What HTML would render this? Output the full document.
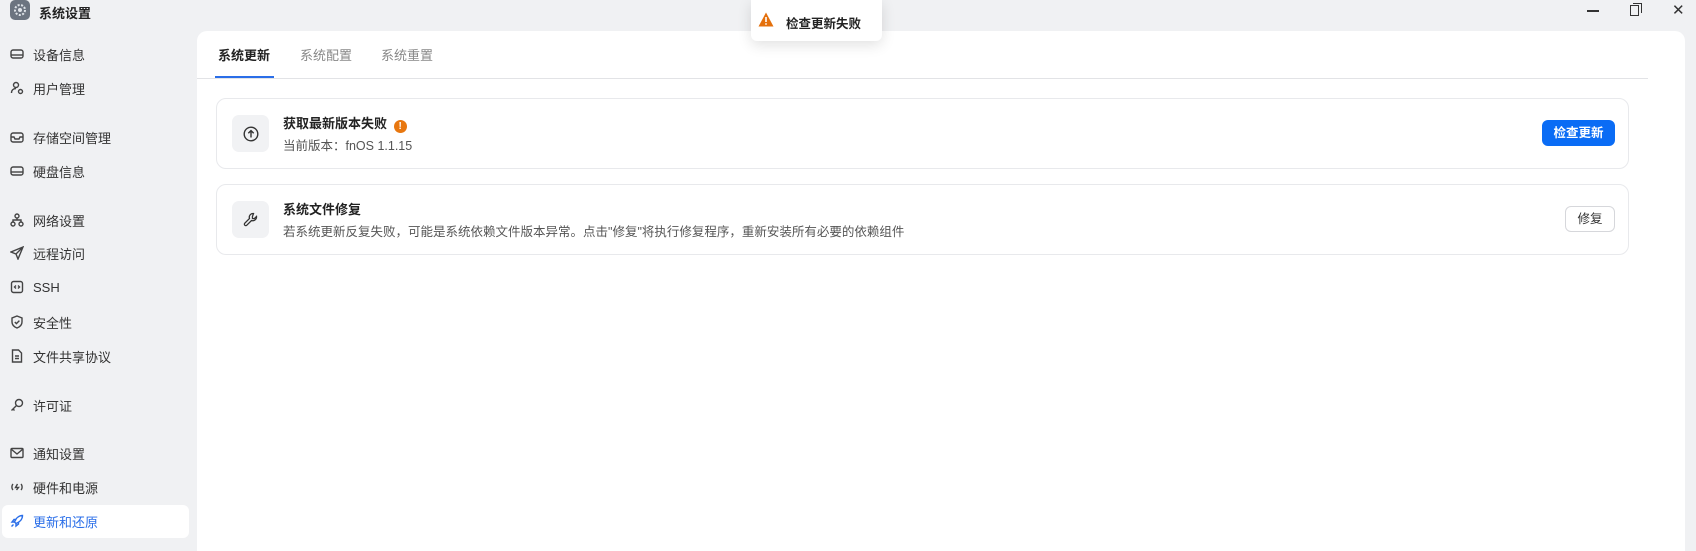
<!DOCTYPE html>
<html><head><meta charset="utf-8"><style>
*{margin:0;padding:0;box-sizing:border-box}
body{width:1696px;height:541px;background:#f0f1f3;font-family:"Liberation Sans","Noto Sans CJK SC",sans-serif;position:relative;overflow:hidden;color:#222}
.abs{position:absolute}
.nav{position:absolute;left:10px;font-size:13px;color:#333;display:flex;align-items:center;height:20px}
.nav svg{width:14px;height:14px;margin-right:9px;stroke:#444;fill:none;stroke-width:1.4}
.panel{position:absolute;left:197px;top:31px;width:1488px;height:520px;background:#fff;border-radius:10px 10px 0 0}
.card{position:absolute;left:19px;width:1413px;height:71px;border:1px solid #e8e9ec;border-radius:10px}
.ib{position:absolute;left:15px;top:16px;width:37px;height:37px;background:#f1f2f4;border-radius:7px;display:flex;align-items:center;justify-content:center}
.t{position:absolute;left:66px;top:14px;font-size:13px;font-weight:bold;color:#222}
.s{position:absolute;left:66px;top:36px;font-size:12.5px;color:#555}
</style></head><body>
<div class="abs" style="left:10px;top:0;width:20px;height:20px;background:#6c7480;border-radius:5px"><svg width="20" height="20" viewBox="0 0 20 20"><circle cx="10" cy="10" r="5" fill="none" stroke="#dfe3e8" stroke-width="2" stroke-dasharray="2 1.5"/><circle cx="10" cy="10" r="2" fill="#dfe3e8"/></svg></div>
<div class="abs" style="left:39px;top:3px;font-size:13px;font-weight:bold">系统设置</div>
<div class="abs" style="left:1587px;top:10px;width:12px;height:1.5px;background:#333"></div>
<div class="abs" style="left:1630px;top:5px;width:9px;height:11px;border:1.3px solid #333"></div>
<div class="abs" style="left:1633px;top:3px;width:9px;height:10px;border-top:1.3px solid #333;border-right:1.3px solid #333"></div>
<div class="abs" style="left:1672px;top:1px;font-size:15px;color:#333">✕</div>

<div class="nav" style="top:44px"><svg viewBox="0 0 14 14"><rect x="1" y="3" width="12" height="8" rx="2"/><path d="M1 8h12"/></svg>设备信息</div>
<div class="nav" style="top:78px"><svg viewBox="0 0 14 14"><circle cx="6" cy="4" r="2.5"/><path d="M1.5 12c0-3 2-4.5 4.5-4.5"/><circle cx="10.5" cy="10.5" r="2"/></svg>用户管理</div>
<div class="nav" style="top:127px"><svg viewBox="0 0 14 14"><rect x="1" y="3" width="12" height="9" rx="2"/><path d="M1 7h3l1 2h4l1-2h3"/></svg>存储空间管理</div>
<div class="nav" style="top:161px"><svg viewBox="0 0 14 14"><rect x="1" y="3" width="12" height="8" rx="2"/><path d="M1 8h12"/></svg>硬盘信息</div>
<div class="nav" style="top:210px"><svg viewBox="0 0 14 14"><circle cx="7" cy="3" r="2"/><circle cx="3" cy="11" r="2"/><circle cx="11" cy="11" r="2"/><path d="M7 5v2M3 9V7h8v2"/></svg>网络设置</div>
<div class="nav" style="top:243px"><svg viewBox="0 0 14 14"><path d="M13 1L1 6l5 2 2 5z M6 8l7-7"/></svg>远程访问</div>
<div class="nav" style="top:277px"><svg viewBox="0 0 14 14"><rect x="1.5" y="1.5" width="11" height="11" rx="2"/><path d="M6 5.5L4.5 7 6 8.5M8 5.5L9.5 7 8 8.5"/></svg>SSH</div>
<div class="nav" style="top:312px"><svg viewBox="0 0 14 14"><path d="M7 1l5 2v4c0 3-2.5 5-5 6-2.5-1-5-3-5-6V3z"/><path d="M4.8 7l1.6 1.6L9.4 5.6"/></svg>安全性</div>
<div class="nav" style="top:346px"><svg viewBox="0 0 14 14"><path d="M2.5 1h6l3 3v9h-9z"/><path d="M5 7h4M5 9.5h4"/></svg>文件共享协议</div>
<div class="nav" style="top:395px"><svg viewBox="0 0 14 14"><circle cx="9" cy="5" r="3.5"/><path d="M6.5 7.5L1.5 12.5M3 11l1.5 1.5"/></svg>许可证</div>
<div class="nav" style="top:443px"><svg viewBox="0 0 14 14"><rect x="1" y="2.5" width="12" height="9" rx="1"/><path d="M1 3l6 5 6-5"/></svg>通知设置</div>
<div class="nav" style="top:477px"><svg viewBox="0 0 14 14"><path d="M3 4C1.5 5.5 1.5 8.5 3 10M11 4c1.5 1.5 1.5 4.5 0 6M7.5 4L5.5 7.5h3L6.5 10"/></svg>硬件和电源</div>
<div class="abs" style="left:2px;top:505px;width:187px;height:33px;background:#fff;border-radius:6px"></div>
<div class="nav" style="top:511px;color:#2a6ee8"><svg viewBox="0 0 14 14" style="stroke:#2a6ee8"><path d="M12.5 1.5C9 1.5 6 4 4.5 8l1.5 1.5C10 8 12.5 5 12.5 1.5z M4.5 8H2l2-2.5h2.5 M6 9.5V12l2.5-2V7.5 M3.5 10.5L1.5 12.5"/></svg>更新和还原</div>

<div class="panel">
 <div class="abs" style="left:21px;top:14px;font-size:13px;font-weight:bold">系统更新</div>
 <div class="abs" style="left:103px;top:14px;font-size:13px;color:#888">系统配置</div>
 <div class="abs" style="left:184px;top:14px;font-size:13px;color:#888">系统重置</div>
 <div class="abs" style="left:0;top:47px;width:1451px;height:1px;background:#e2e3e6"></div>
 <div class="abs" style="left:18px;top:45px;width:59px;height:2px;background:#2a6ee8"></div>
 <div class="card" style="top:67px">
  <div class="ib"><svg width="16" height="16" viewBox="0 0 16 16" fill="none" stroke="#333" stroke-width="1.4"><circle cx="8" cy="8" r="6.8"/><path d="M8 11.5V4.8M5.3 7.3L8 4.6l2.7 2.7"/></svg></div>
  <div class="t">获取最新版本失败 <span style="display:inline-block;width:13px;height:13px;border-radius:50%;background:#e8770f;color:#fff;font-size:10px;text-align:center;line-height:13px;vertical-align:-1px;margin-left:3px">!</span></div>
  <div class="s">当前版本：fnOS 1.1.15</div>
  <div class="abs" style="left:1325px;top:21px;width:73px;height:26px;background:#0a6cf5;border-radius:6px;color:#fff;font-size:12.5px;font-weight:bold;text-align:center;line-height:26px">检查更新</div>
 </div>
 <div class="card" style="top:153px">
  <div class="ib"><svg width="16" height="16" viewBox="0 0 16 16" fill="none" stroke="#333" stroke-width="1.3"><path d="M10.5 1.5a3.8 3.8 0 0 0-4 5L1.8 11.2a1.4 1.4 0 0 0 2 2l4.7-4.7a3.8 3.8 0 0 0 5-4L11.3 6.6 9.5 6.5 9.4 4.7z"/></svg></div>
  <div class="t">系统文件修复</div>
  <div class="s">若系统更新反复失败，可能是系统依赖文件版本异常。点击"修复"将执行修复程序，重新安装所有必要的依赖组件</div>
  <div class="abs" style="left:1348px;top:21px;width:50px;height:26px;border:1px solid #d6d7db;border-radius:6px;font-size:12.5px;text-align:center;line-height:24px;color:#333">修复</div>
 </div>
</div>

<div class="abs" style="left:751px;top:0;width:131px;height:41px;background:#fff;border-radius:0 0 6px 6px;box-shadow:0 4px 14px rgba(0,0,0,.12)">
 <svg class="abs" style="left:7px;top:12px" width="16" height="15" viewBox="0 0 16 15"><path d="M8 0.5L15.5 14.5H0.5z" fill="#e4700c"/><path d="M8 5v5" stroke="#fff" stroke-width="1.6"/><circle cx="8" cy="12" r="0.9" fill="#fff"/></svg>
 <div class="abs" style="left:35px;top:13px;font-size:12.5px;font-weight:bold">检查更新失败</div>
</div>
</body></html>
